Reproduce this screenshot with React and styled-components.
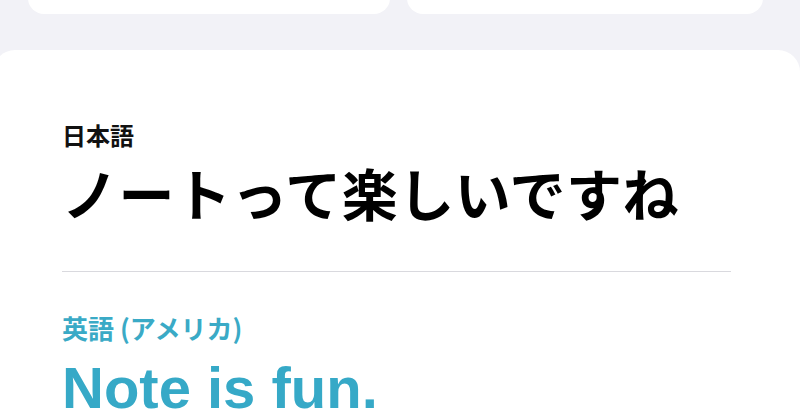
import styled, { createGlobalStyle } from 'styled-components';

const GlobalStyle = createGlobalStyle`
  html, body {
    margin: 0;
    padding: 0;
    background: #f2f2f7;
    overflow: hidden;
  }
  body {
    font-family: "Noto Sans CJK JP", "Noto Sans", sans-serif;
  }
`;

const Screen = styled.div`
  width: 800px;
  height: 418px;
  overflow: hidden;
  background: #f2f2f7;
`;

const TopRow = styled.div`
  display: flex;
  gap: 17px;
  margin-top: -46px;
  padding-left: 28px;
`;

const SmallCard = styled.div`
  width: ${({ w }) => w}px;
  height: 60px;
  background: #ffffff;
  border-radius: 16px;
`;

const MainCard = styled.section`
  margin-top: 36px;
  margin-left: -7px;
  width: 807px;
  box-sizing: border-box;
  padding: 73px 69px 0;
  background: #ffffff;
  border-radius: 22px;
  min-height: 400px;
`;

const Label = styled.div`
  font-size: ${({ size }) => size || 24}px;
  line-height: 1;
  font-weight: 700;
  color: ${({ accent }) => (accent ? '#3aaac6' : '#111111')};
  margin-top: ${({ top }) => top || 0}px;
`;

const Phrase = styled.div`
  margin-top: 17px;
  font-size: 56px;
  line-height: 1;
  font-weight: 700;
  color: #000000;
  letter-spacing: 0.5px;
  white-space: nowrap;
`;

const Divider = styled.hr`
  margin: 51px 0 0 0;
  width: 669px;
  border: none;
  border-top: 1px solid #d9d9de;
`;

const Translation = styled.div`
  margin-top: 18px;
  font-family: "Liberation Sans", Arial, sans-serif;
  font-size: 58px;
  line-height: 1;
  font-weight: 700;
  color: #36a9c7;
  white-space: nowrap;
`;

export default function App() {
  return (
    <Screen>
      <GlobalStyle />
      <TopRow>
        <SmallCard w={362} />
        <SmallCard w={356} />
      </TopRow>
      <MainCard>
        <Label>日本語</Label>
        <Phrase>ノートって楽しいですね</Phrase>
        <Divider />
        <Label accent size={26} top={43}>英語 (アメリカ)</Label>
        <Translation>Note is fun.</Translation>
      </MainCard>
    </Screen>
  );
}
